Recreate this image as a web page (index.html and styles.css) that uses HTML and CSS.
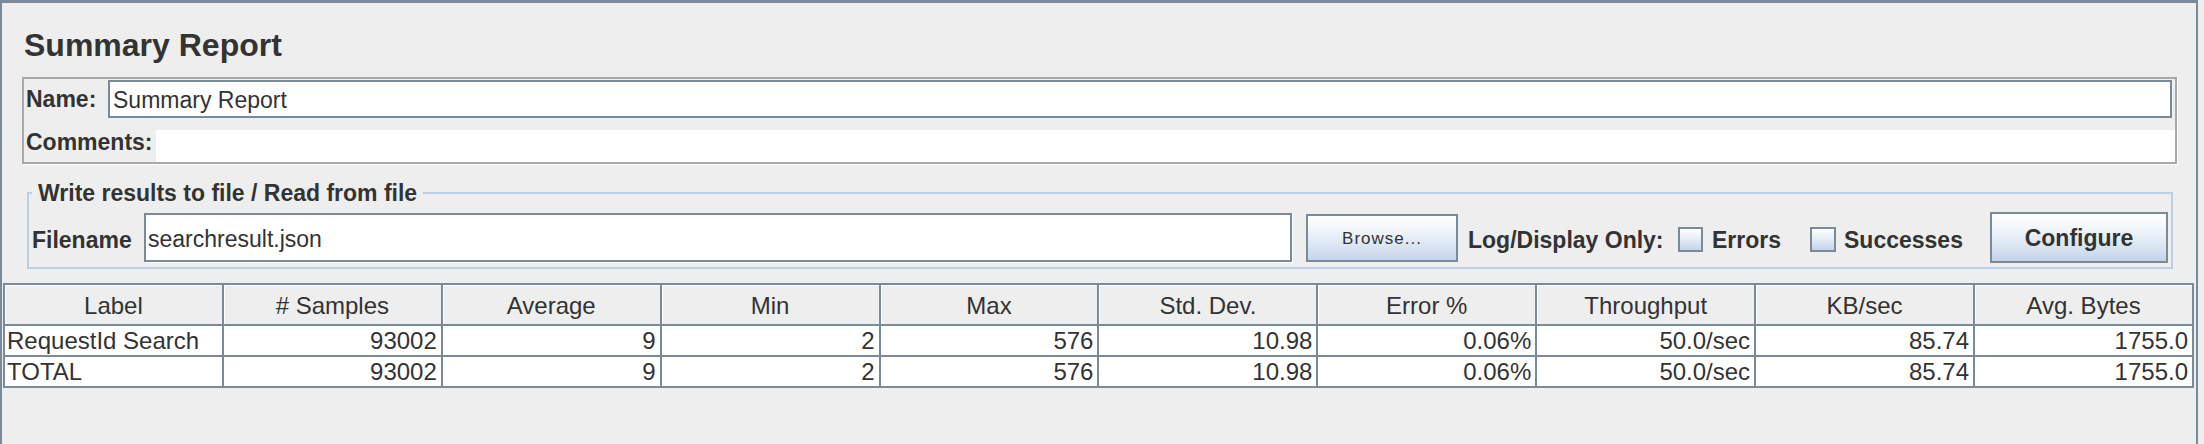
FILE: index.html
```html
<!DOCTYPE html>
<html lang="en">
<head>
<meta charset="utf-8">
<title>Summary Report</title>
<link rel="stylesheet" href="styles.css">
</head>
<body>
<div class="window">
  <h1 class="title">Summary Report</h1>
  <div class="name-panel">
    <div class="name-row">
      <label class="lbl name-lbl" for="name">Name:</label>
      <input id="name" class="name-input" type="text" value="Summary Report">
    </div>
    <div class="comments-row">
      <label class="lbl comments-lbl" for="comments">Comments:</label>
      <textarea id="comments" class="comments"></textarea>
    </div>
  </div>
  <fieldset class="file-box">
    <legend class="file-legend">Write results to file / Read from file</legend>
    <div class="file-row">
      <label class="lbl fn-lbl" for="fn">Filename</label>
      <input id="fn" class="fn-input" type="text" value="searchresult.json">
      <button class="btn browse" type="button">Browse...</button>
      <span class="lbl log-lbl">Log/Display Only:</span>
      <label class="check check-errors"><input class="box" type="checkbox"><span class="lbl">Errors</span></label>
      <label class="check check-success"><input class="box" type="checkbox"><span class="lbl">Successes</span></label>
      <button class="btn configure" type="button">Configure</button>
    </div>
  </fieldset>
  <table class="grid">
    <thead>
      <tr>
        <th>Label</th><th># Samples</th><th>Average</th><th>Min</th><th>Max</th>
        <th>Std. Dev.</th><th>Error %</th><th>Throughput</th><th>KB/sec</th><th>Avg. Bytes</th>
      </tr>
    </thead>
    <tbody>
      <tr>
        <td class="txt">RequestId Search</td><td>93002</td><td>9</td><td>2</td><td>576</td>
        <td>10.98</td><td>0.06%</td><td>50.0/sec</td><td>85.74</td><td>1755.0</td>
      </tr>
      <tr>
        <td class="txt">TOTAL</td><td>93002</td><td>9</td><td>2</td><td>576</td>
        <td>10.98</td><td>0.06%</td><td>50.0/sec</td><td>85.74</td><td>1755.0</td>
      </tr>
    </tbody>
  </table>
</div>
</body>
</html>
```

FILE: styles.css
```css
* { box-sizing: border-box; }

html, body {
  margin: 0;
  padding: 0;
  background: #eeeeee;
  overflow: hidden;
}

body {
  width: 2204px;
  height: 444px;
  font-family: "Liberation Sans", Arial, sans-serif;
  color: #333333;
}

.window {
  width: 2198px;
  min-height: 480px;
  border-style: solid;
  border-color: #7a8a99;
  border-width: 3px 2px 0 2px;
  display: flex;
  flex-direction: column;
  align-items: stretch;
}

.title {
  margin: 24px 0 0 22px;
  font-size: 32px;
  line-height: 36px;
  font-weight: bold;
  color: #333333;
}

.lbl {
  font-size: 23px;
  font-weight: bold;
  line-height: 26px;
  color: #333333;
  white-space: nowrap;
}

/* Name / comments panel */
.name-panel {
  margin: 14px 19px 0 20px;
  border: 2px solid #a8a8a8;
  box-shadow: 1px 1px 0 #ffffff;
  padding: 1px 0 0 2px;
}

.name-row {
  display: flex;
  align-items: center;
  margin-right: 3px;
}

.name-lbl { width: 82px; flex: none; }

.name-input {
  flex: 1;
  min-width: 0;
  height: 38px;
  margin: 0;
  border: 2px solid #7a8a99;
  padding: 3px 0 0 3px;
  background: #ffffff;
  font-family: "Liberation Sans", Arial, sans-serif;
  font-size: 23px;
  color: #333333;
  outline: none;
}

.comments-row {
  display: flex;
  align-items: flex-start;
  margin-top: 12px;
  height: 32px;
}

.comments-lbl { width: 130px; flex: none; line-height: 20px; margin-top: 2px; }

.comments {
  flex: 1;
  min-width: 0;
  height: 32px;
  margin: 0;
  border: 0;
  padding: 0;
  resize: none;
  background: #ffffff;
  outline: none;
}

/* File box */
.file-box {
  margin: 16px 23px 0 25px;
  border: 2px solid #b8cfe5;
  padding: 6px 3px 4px 3px;
  min-width: 0;
}

.file-legend {
  margin: 0;
  padding: 0 6px;
  font-size: 23px;
  font-weight: bold;
  line-height: 26px;
  color: #333333;
}

.file-row {
  display: flex;
  align-items: center;
  height: 51px;
}

.fn-lbl { width: 112px; flex: none; padding-top: 4px; }

.fn-input {
  flex: none;
  width: 1148px;
  height: 49px;
  margin: 0;
  border: 2px solid #7a8a99;
  box-shadow: 1px 1px 0 #ffffff;
  padding: 4px 0 0 2px;
  background: #ffffff;
  font-family: "Liberation Sans", Arial, sans-serif;
  font-size: 23px;
  color: #333333;
  outline: none;
}

.btn {
  flex: none;
  margin: 0;
  border: 2px solid #7a8a99;
  padding: 0;
  background: linear-gradient(to bottom, #ffffff 0%, #f2f6fb 30%, #dce7f3 65%, #c3d4e9 100%);
  font-family: "Liberation Sans", Arial, sans-serif;
  color: #333333;
  cursor: pointer;
}

.browse {
  margin-left: 14px;
  width: 152px;
  height: 48px;
  font-size: 17px;
  letter-spacing: 1px;
  padding-top: 2px;
}

.log-lbl { flex: none; width: 190px; margin-left: 10px; padding-top: 4px; }

.check {
  display: flex;
  align-items: center;
  flex: none;
}

.check-errors { margin-left: 20px; gap: 9px; }
.check-success { margin-left: 28px; gap: 8px; }
.check .lbl { padding-top: 4px; }
.check-errors .lbl { width: 70px; }
.check-success .lbl { width: 125px; }

.box {
  appearance: none;
  -webkit-appearance: none;
  flex: none;
  width: 25px;
  height: 25px;
  margin: 4px 0 0 0;
  border: 2px solid #7a8a99;
  background: linear-gradient(to bottom, #ffffff 0%, #e6eef7 45%, #c3d4e9 100%);
}

.check-success .box { width: 26px; }

.configure {
  margin-left: 21px;
  width: 178px;
  height: 51px;
  font-size: 23px;
  font-weight: bold;
  padding-top: 2px;
}

/* Results table */
.grid {
  margin: 14px 2px 0 1px;
  width: 2191px;
  table-layout: fixed;
  border-collapse: separate;
  border-spacing: 2px;
  background: #7a8a99;
  font-size: 24px;
  color: #333333;
}

.grid th {
  background: #eeeeee;
  box-shadow: inset 1px 1px 0 #ffffff;
  font-weight: normal;
  line-height: 36px;
  padding: 3px 0 0 0;
  text-align: center;
  white-space: nowrap;
}

.grid td {
  background: #ffffff;
  line-height: 29px;
  padding: 0 4px 0 2px;
  text-align: right;
  white-space: nowrap;
}

.grid td.txt { text-align: left; }
```
